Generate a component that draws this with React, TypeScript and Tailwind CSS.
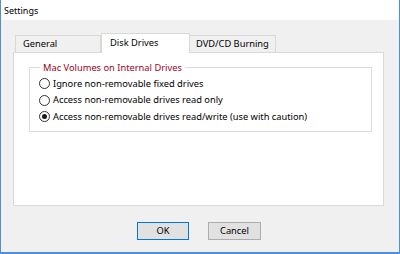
import React from "react";

function Radio({ checked, label }: { checked?: boolean; label: string }) {
  return (
    <div className="flex items-center h-[16.5px]">
      <span className="w-[11px] h-[11px] rounded-full border border-[#333333] bg-white flex items-center justify-center shrink-0">
        {checked && <span className="w-[5px] h-[5px] rounded-full bg-[#1a1a1a]" />}
      </span>
      <span className="ml-[3px] text-black">{label}</span>
    </div>
  );
}

export default function App() {
  return (
    <div
      className="w-[400px] h-[254px] bg-[#f0f0f0] border-l border-r border-b-2 border-[#4f8fd8] flex flex-col text-[9.3px] leading-none text-black"
      style={{ fontFamily: '"Noto Sans", "Open Sans", sans-serif' }}
    >
      <div className="h-[20px] bg-white flex items-center pl-[3px] text-[9px]">Settings</div>
      <div className="flex flex-col pl-[12px] pr-[15px] pt-[13px]">
        <div className="flex items-end h-[19px] pl-[2px] relative z-10">
          <div className="w-[86px] h-[17px] border border-b-0 border-[#d9d9d9] bg-[#f0f0f0] flex items-center pl-[7px] mt-[2px]">
            General
          </div>
          <div className="w-[89px] h-[20px] border border-b-0 border-[#d9d9d9] bg-white flex items-center pl-[8px] -mb-px pb-[2px]">
            Disk Drives
          </div>
          <div className="w-[86px] h-[17px] border border-b-0 border-l-0 border-[#d9d9d9] bg-[#f0f0f0] flex items-center pl-[6px]">
            DVD/CD Burning
          </div>
        </div>
        <div className="h-[154px] border border-[#d9d9d9] bg-white pl-[15px] pr-[11px] pt-[10px]">
          <fieldset className="border border-[#dcdcdc] pl-[9px] pr-2 pb-[6px] pt-[3px]">
            <legend className="ml-[1px] px-[3px] text-[#a0001e]">Mac Volumes on Internal Drives</legend>
            <Radio label="Ignore non-removable fixed drives" />
            <Radio label="Access non-removable drives read only" />
            <Radio checked label="Access non-removable drives read/write (use with caution)" />
          </fieldset>
        </div>
      </div>
      <div className="flex justify-center gap-[19px] mt-[16px] pr-[2px]">
        <button className="w-[52px] h-[18px] border border-[#0078d7] bg-[#e1e1e1] flex items-center justify-center">
          OK
        </button>
        <button className="w-[53px] h-[18px] border border-[#adadad] bg-[#e1e1e1] flex items-center justify-center">
          Cancel
        </button>
      </div>
    </div>
  );
}
